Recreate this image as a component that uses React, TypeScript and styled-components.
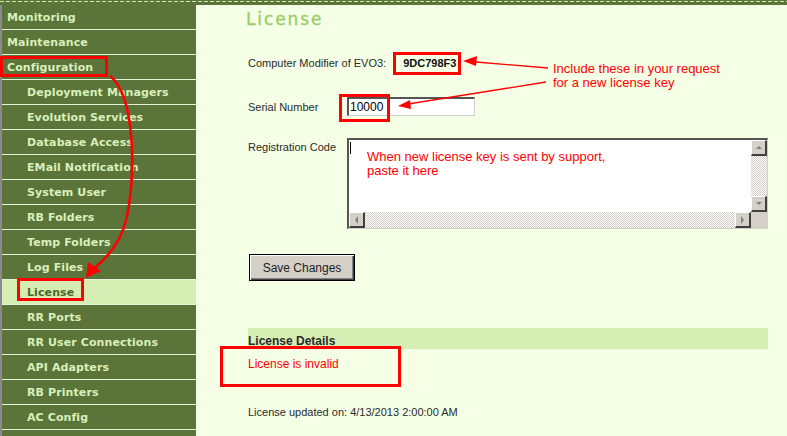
import React from 'react';
import styled, { createGlobalStyle } from 'styled-components';

const GlobalStyle = createGlobalStyle`
    html, body {
        margin: 0;
        padding: 0;
        background: #f5ffe6;
    }
    body {
        font-family: "Liberation Sans", Arial, sans-serif;
    }
`;

const Page = styled.div`
    position: relative;
    width: 787px;
    height: 436px;
    overflow: hidden;
    background: #f5ffe6;
    display: flex;
    flex-direction: column;
`;

const TopBar = styled.div`
    height: 5px;
    flex-shrink: 0;
    background: #5b743a;
    display: flex;
    align-items: flex-start;
    padding-top: 1px;
    box-sizing: border-box;
`;

const Dashes = styled.div`
    height: 1px;
    width: 100%;
    background: repeating-linear-gradient(90deg, #cfe8a8 0 4px, transparent 4px 6px);
`;

const Body = styled.div`
    display: flex;
    flex: 1;
`;

const Sidebar = styled.nav`
    width: 195px;
    background: #5b743a;
    border-left: 2px solid #8a8a8a;
    display: flex;
    flex-direction: column;
`;

const NavItem = styled.div<{ $sub?: boolean; $active?: boolean }>`
    height: 24px;
    border-bottom: 1px solid #e6f2d8;
    display: flex;
    align-items: center;
    padding-left: ${(p) => (p.$sub ? 25 : 5)}px;
    font-family: "DejaVu Sans", Verdana, sans-serif;
    font-weight: bold;
    font-size: 11px;
    letter-spacing: 0.1px;
    color: ${(p) => (p.$active ? '#4c6a2c' : '#d9f0bb')};
    background: ${(p) => (p.$active ? '#d6eeb4' : 'transparent')};
`;

const Content = styled.main`
    flex: 1;
    display: flex;
    flex-direction: column;
    padding-left: 52px;
    padding-right: 19px;
    color: #2b2b2b;
    font-size: 11px;
`;

const Title = styled.h1`
    margin: 4px 0 0 -2px;
    font-family: "DejaVu Sans", Verdana, sans-serif;
    font-weight: normal;
    font-size: 17px;
    line-height: 20px;
    letter-spacing: 1.9px;
    color: #99cc66;
    -webkit-text-stroke: 0.3px #99cc66;
`;

const Row = styled.div<{ $top: number }>`
    display: flex;
    align-items: center;
    margin-top: ${(p) => p.$top}px;
`;

const Label = styled.div<{ $width?: number }>`
    width: ${(p) => (p.$width ? `${p.$width}px` : 'auto')};
    flex-shrink: 0;
    font-size: 11px;
`;

const ModValue = styled.div`
    margin-left: 17px;
    font-weight: bold;
    font-size: 11px;
    color: #111;
`;

const TextInput = styled.div`
    width: 124px;
    height: 16px;
    background: #fff;
    border-top: 2px solid #555;
    border-left: 2px solid #555;
    border-right: 1px solid #cfcfcf;
    border-bottom: 1px solid #cfcfcf;
    font-size: 12px;
    line-height: 16px;
    padding-left: 1px;
    color: #000;
`;

const RegRow = styled.div`
    display: flex;
    align-items: flex-start;
    margin-top: 22px;
`;

const RegLabel = styled(Label)`
    margin-top: 3px;
`;

const TextArea = styled.div`
    width: 418px;
    height: 88px;
    background: #fff;
    border-top: 2px solid #555;
    border-left: 2px solid #555;
    border-right: 1px solid #d4d0c8;
    border-bottom: 1px solid #d4d0c8;
    display: grid;
    grid-template-columns: 1fr 16px;
    grid-template-rows: 1fr 16px;
    box-sizing: content-box;
`;

const TextBody = styled.div`
    position: relative;
    padding: 10px 0 0 18px;
    color: #f00;
    font-size: 13px;
    line-height: 14px;
`;

const Caret = styled.span`
    position: absolute;
    left: 1px;
    top: 2px;
    width: 1px;
    height: 12px;
    background: #000;
`;

const Track = styled.div<{ $vertical?: boolean }>`
    display: flex;
    flex-direction: ${(p) => (p.$vertical ? 'column' : 'row')};
    justify-content: space-between;
    background: repeating-conic-gradient(#d4d0c8 0 25%, #fff 0 50%) 0 0 / 2px 2px;
`;

const ScrollButton = styled.div`
    width: 16px;
    height: 16px;
    box-sizing: border-box;
    background: #d4d0c8;
    border-top: 1px solid #fff;
    border-left: 1px solid #fff;
    border-right: 2px solid #404040;
    border-bottom: 2px solid #404040;
    display: flex;
    align-items: center;
    justify-content: center;
`;

const Corner = styled.div`
    background: #d4d0c8;
`;

const SaveButton = styled.button`
    margin-top: 25px;
    align-self: flex-start;
    margin-left: 1px;
    width: 106px;
    height: 27px;
    background: #d4d0c8;
    border: 1px solid #000;
    box-shadow: inset 1px 1px 0 #fff, inset -1px -1px 0 #404040, inset -2px -2px 0 #808080;
    font-family: "Liberation Sans", Arial, sans-serif;
    font-size: 12px;
    color: #222;
    padding: 0;
`;

const DetailsBar = styled.div`
    margin-top: 47px;
    height: 21px;
    background: #d6eeb4;
    display: flex;
    align-items: flex-end;
    padding-bottom: 1px;
    box-sizing: border-box;
    font-weight: bold;
    font-size: 12px;
    color: #2b2b2b;
`;

const Invalid = styled.div`
    margin-top: 8px;
    color: #f00;
    font-size: 12px;
`;

const Updated = styled.div`
    margin-top: 35px;
    font-size: 11px;
    color: #2b2b2b;
`;

const Overlay = styled.svg`
    position: absolute;
    left: 0;
    top: 0;
    pointer-events: none;
`;

const Note = styled.div`
    position: absolute;
    left: 553px;
    top: 62px;
    color: #f00;
    font-size: 13px;
    line-height: 14px;
`;

const navItems: { label: string; sub?: boolean; active?: boolean }[] = [
    { label: 'Monitoring' },
    { label: 'Maintenance' },
    { label: 'Configuration' },
    { label: 'Deployment Managers', sub: true },
    { label: 'Evolution Services', sub: true },
    { label: 'Database Access', sub: true },
    { label: 'EMail Notification', sub: true },
    { label: 'System User', sub: true },
    { label: 'RB Folders', sub: true },
    { label: 'Temp Folders', sub: true },
    { label: 'Log Files', sub: true },
    { label: 'License', sub: true, active: true },
    { label: 'RR Ports', sub: true },
    { label: 'RR User Connections', sub: true },
    { label: 'API Adapters', sub: true },
    { label: 'RB Printers', sub: true },
    { label: 'AC Config', sub: true },
    { label: '', sub: true },
];

const Arrow = ({ dir }: { dir: 'up' | 'down' | 'left' | 'right' }) => {
    const pts = {
        up: '1,5 4,2 7,5',
        down: '1,2 4,5 7,2',
        left: '5,0 2,4 5,8',
        right: '2,0 5,4 2,8',
    }[dir];
    return (
        <svg width="8" height="8" viewBox="0 0 8 8">
            <polygon points={pts} fill="#808080" />
        </svg>
    );
};

export default function App() {
    return (
        <>
            <GlobalStyle />
            <Page>
                <TopBar>
                    <Dashes />
                </TopBar>
                <Body>
                    <Sidebar>
                        {navItems.map((item, i) => (
                            <NavItem key={i} $sub={item.sub} $active={item.active}>
                                {item.label}
                            </NavItem>
                        ))}
                    </Sidebar>
                    <Content>
                        <Title>License</Title>
                        <Row $top={28}>
                            <Label>Computer Modifier of EVO3:</Label>
                            <ModValue>9DC798F3</ModValue>
                        </Row>
                        <Row $top={28}>
                            <Label $width={99}>Serial Number</Label>
                            <TextInput>10000</TextInput>
                        </Row>
                        <RegRow>
                            <RegLabel $width={99}>Registration Code</RegLabel>
                            <TextArea>
                                <TextBody>
                                    <Caret />
                                    When new license key is sent by support,
                                    <br />
                                    paste it here
                                </TextBody>
                                <Track $vertical>
                                    <ScrollButton>
                                        <Arrow dir="up" />
                                    </ScrollButton>
                                    <ScrollButton>
                                        <Arrow dir="down" />
                                    </ScrollButton>
                                </Track>
                                <Track>
                                    <ScrollButton>
                                        <Arrow dir="left" />
                                    </ScrollButton>
                                    <ScrollButton>
                                        <Arrow dir="right" />
                                    </ScrollButton>
                                </Track>
                                <Corner />
                            </TextArea>
                        </RegRow>
                        <SaveButton>Save Changes</SaveButton>
                        <DetailsBar>License Details</DetailsBar>
                        <Invalid>License is invalid</Invalid>
                        <Updated>License updated on: 4/13/2013 2:00:00 AM</Updated>
                    </Content>
                </Body>

                <Note>
                    Include these in your request
                    <br />
                    for a new license key
                </Note>

                <Overlay width="787" height="436" viewBox="0 0 787 436">
                    <g fill="none" stroke="#f00" strokeWidth="3">
                        <rect x="1.5" y="57.5" width="105" height="18" />
                        <rect x="18.5" y="279.5" width="64" height="20" />
                        <rect x="394.5" y="53.5" width="65" height="20" />
                        <rect x="340.5" y="95.5" width="48" height="25" />
                        <rect x="221.5" y="347.5" width="178" height="38" />
                    </g>
                    <g fill="none" stroke="#f00" strokeWidth="1.3">
                        <path d="M548 68 L 476 62" />
                        <path d="M546 82 L 408 104" />
                    </g>
                    <path
                        d="M110 76 C 136 96, 136 180, 126 220 C 120 245, 105 260, 92 270"
                        fill="none"
                        stroke="#f00"
                        strokeWidth="2.6"
                    />
                    <g fill="#f00">
                        <polygon points="463,61 477,56 476,66" />
                        <polygon points="398,106 410,100 411,109" />
                        <polygon points="86,278 88,262 101,271" />
                    </g>
                </Overlay>
            </Page>
        </>
    );
}
